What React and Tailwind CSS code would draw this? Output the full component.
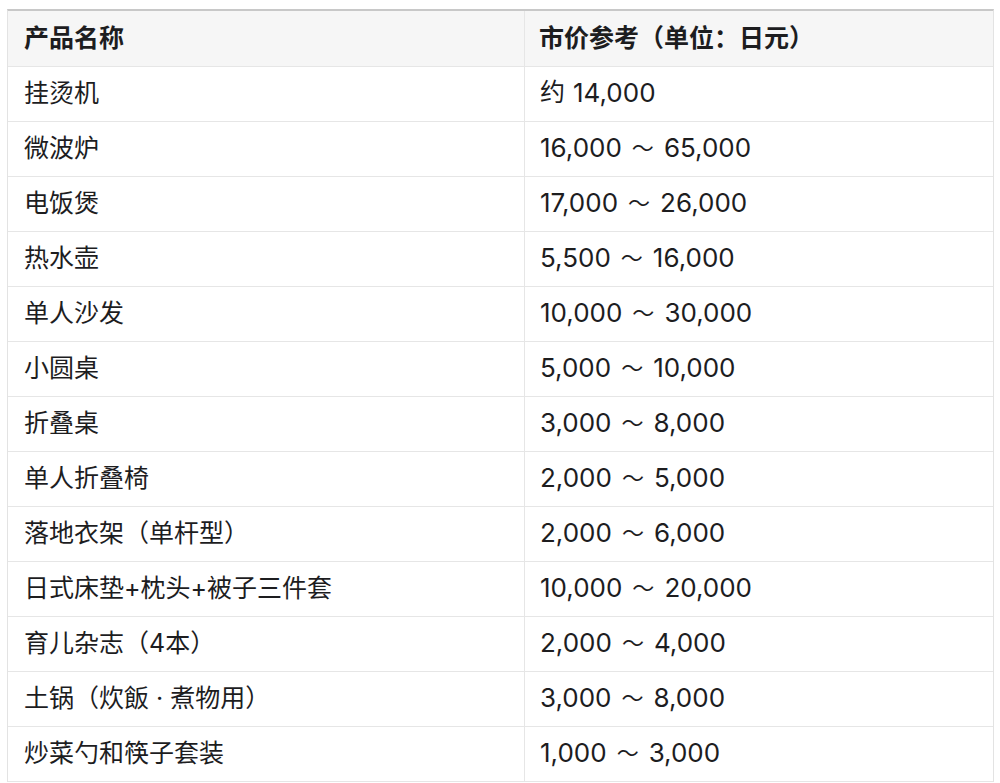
import React from "react";

const rows = [
  ["挂烫机", "约 14,000"],
  ["微波炉", "16,000 ～ 65,000"],
  ["电饭煲", "17,000 ～ 26,000"],
  ["热水壶", "5,500 ～ 16,000"],
  ["单人沙发", "10,000 ～ 30,000"],
  ["小圆桌", "5,000 ～ 10,000"],
  ["折叠桌", "3,000 ～ 8,000"],
  ["单人折叠椅", "2,000 ～ 5,000"],
  ["落地衣架（单杆型）", "2,000 ～ 6,000"],
  ["日式床垫+枕头+被子三件套", "10,000 ～ 20,000"],
  ["育儿杂志（4本）", "2,000 ～ 4,000"],
  ["土锅（炊飯 · 煮物用）", "3,000 ～ 8,000"],
  ["炒菜勺和筷子套装", "1,000 ～ 3,000"],
];

function Price({ text }) {
  if (text.startsWith("约 ")) {
    return (
      <>
        <span className="text-[25px] mr-[8px]">约</span>
        <span>{text.slice(2)}</span>
      </>
    );
  }
  const [lo, hi] = text.split(" ～ ");
  return (
    <>
      <span>{lo}</span>
      <span className="text-[22px] mx-[10px] leading-none">～</span>
      <span>{hi}</span>
    </>
  );
}

export default function App() {
  return (
    <div
      className="w-[1000px] h-[783px] bg-white pt-[9px] pl-[7px] overflow-hidden text-[#1d1d1f]"
      style={{ fontFamily: '"Inter", "Noto Sans CJK SC", sans-serif' }}
    >
      <div className="w-[987px] border-t-2 border-t-[#c8c8c8] border-l border-r border-[#e3e3e3]">
        <div className="flex h-[56px] bg-[#f6f6f6] border-b border-[#e6e6e6] font-bold text-[25px]">
          <div className="w-[517px] flex items-center pl-[16px] border-r border-[#e6e6e6]">产品名称</div>
          <div className="flex-1 flex items-center pl-[14px]">市价参考（单位：日元）</div>
        </div>
        {rows.map(([a, b], i) => (
          <div key={i} className="flex h-[55px] border-b border-[#e6e6e6]">
            <div className="w-[517px] flex items-center pl-[16px] border-r border-[#e6e6e6] text-[25px]">{a}</div>
            <div className="flex-1 flex items-center pl-[15px] pb-[3px] text-[26px]">
              <Price text={b} />
            </div>
          </div>
        ))}
      </div>
    </div>
  );
}
